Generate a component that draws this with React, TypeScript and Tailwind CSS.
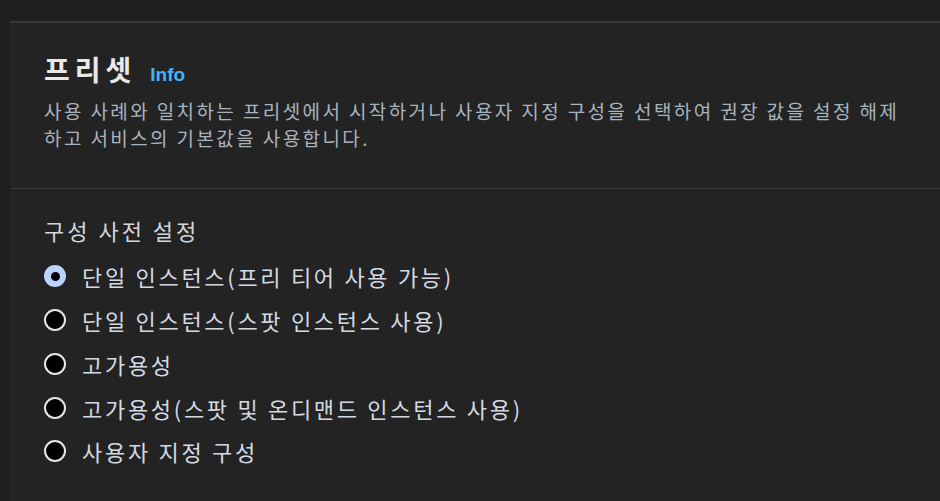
const options = [
  "단일 인스턴스(프리 티어 사용 가능)",
  "단일 인스턴스(스팟 인스턴스 사용)",
  "고가용성",
  "고가용성(스팟 및 온디맨드 인스턴스 사용)",
  "사용자 지정 구성",
];

function Radio({ checked }: { checked: boolean }) {
  if (checked) {
    return (
      <span className="flex h-[22px] w-[22px] shrink-0 items-center justify-center rounded-full bg-[#bcd3ff]">
        <span className="h-[9px] w-[9px] rounded-full bg-black" />
      </span>
    );
  }
  return <span className="h-[22px] w-[22px] shrink-0 rounded-full border-2 border-[#e6e6e6] bg-black" />;
}

export default function App() {
  return (
    <div className="h-[501px] w-[940px] overflow-hidden bg-[#1f1f1f] pl-[10px] pt-[21px] font-['Noto_Sans_CJK_KR',sans-serif]">
      <div className="h-full border-t-2 border-[#383838] bg-[#232323]">
        <div className="pb-[37px] pl-[34px] pr-[20px] pt-[26px]">
          <div className="flex items-baseline gap-[14px]">
            <h2 className="text-[28px] font-bold leading-[40px] tracking-[5px] text-[#e9e9e9]">프리셋</h2>
            <span className="font-['Liberation_Sans',sans-serif] text-[19px] font-bold text-[#42b4ff]">Info</span>
          </div>
          <p className="mt-[7px] text-[19px] leading-[27px] tracking-[2.4px] text-[#a9b3bf]">
            사용 사례와 일치하는 프리셋에서 시작하거나 사용자 지정 구성을 선택하여 권장 값을 설정 해제 하고 서비스의 기본값을 사용합니다.
          </p>
        </div>
        <div className="border-t border-[#3a3d3d]" />
        <div className="px-[34px] pt-[26px]">
          <div className="text-[22px] leading-[30px] tracking-[3px] text-[#d2d6dc]">구성 사전 설정</div>
          <div className="mt-[10px] flex flex-col">
            {options.map((o, i) => (
              <label key={o} className="flex h-[43.75px] items-center gap-[16px]">
                <Radio checked={i === 0} />
                <span className="text-[22px] leading-[30px] tracking-[2.7px] text-[#d5dae2]">{o}</span>
              </label>
            ))}
          </div>
        </div>
      </div>
    </div>
  );
}
